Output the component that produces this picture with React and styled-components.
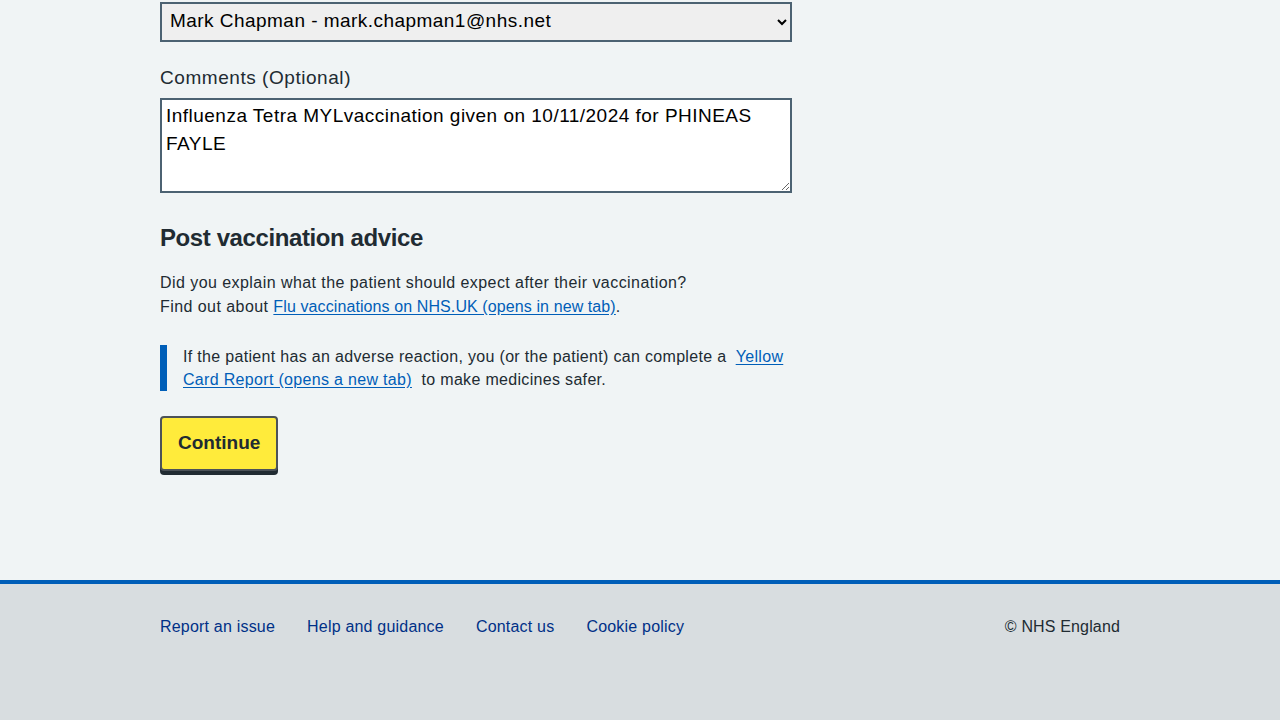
import React from "react";
import styled, { createGlobalStyle } from "styled-components";

const GlobalStyle = createGlobalStyle`
  html, body { margin: 0; padding: 0; }
  body {
    background: #f0f4f5;
    font-family: "Liberation Sans", Arial, sans-serif;
    color: #212b32;
    -webkit-font-smoothing: antialiased;
  }
  * { box-sizing: border-box; }
`;

const Page = styled.div`
  min-height: 720px;
  display: flex;
  flex-direction: column;
`;

const Main = styled.main`
  width: 960px;
  margin: 0 auto;
  padding: 2px 0 109px;
`;

const Form = styled.form`
  width: 632px;
  display: flex;
  flex-direction: column;
`;

const Select = styled.select`
  width: 100%;
  height: 40px;
  border: 2px solid #4c6272;
  border-radius: 0;
  background: #efefef;
  color: #000;
  font-family: "Liberation Sans", Arial, sans-serif;
  font-size: 19px;
  letter-spacing: 0.46px;
  padding: 0 4px 4px 4px;
  margin: 0 0 22px;
`;

const Label = styled.label`
  display: block;
  font-size: 19px;
  line-height: 28px;
  letter-spacing: 0.55px;
  margin-bottom: 6px;
  color: #212b32;
`;

const TextArea = styled.textarea`
  display: block;
  width: 100%;
  height: 95px;
  border: 2px solid #4c6272;
  border-radius: 0;
  background: #fff;
  color: #000;
  font-family: "Liberation Sans", Arial, sans-serif;
  font-size: 19px;
  line-height: 28px;
  letter-spacing: 0.48px;
  padding: 2px 4px;
  margin: 0;
  resize: vertical;
`;

const Heading = styled.h2`
  font-size: 24px;
  line-height: 32px;
  font-weight: 700;
  letter-spacing: -0.4px;
  margin: 29px 0 17px;
  color: #212b32;
`;

const Para = styled.p`
  font-size: 16px;
  line-height: 24px;
  letter-spacing: 0.44px;
  margin: 0 0 26px;
`;

const Link = styled.a`
  color: #005eb8;
  text-decoration: underline;
  text-underline-offset: 2px;
  letter-spacing: ${(p) => p.$spacing || "inherit"};
`;

const Inset = styled.div`
  border-left: 7px solid #005eb8;
  padding-left: 16px;
  font-size: 16px;
  line-height: 23px;
  letter-spacing: 0.32px;
  margin: 0 0 24px;
`;

const InsetText = styled.p`
  margin: 0;
`;

const Button = styled.button`
  align-self: flex-start;
  height: 55px;
  background: #ffeb3b;
  border: 2px solid #4c5258;
  border-radius: 4px;
  box-shadow: 0 4px 0 #212b32;
  color: #212b32;
  font-family: "Liberation Sans", Arial, sans-serif;
  font-size: 19px;
  font-weight: 700;
  padding: 0 16px 2px;
  margin-top: 1px;
  cursor: pointer;
`;

const Footer = styled.footer`
  flex: 1;
  background: #d8dde0;
  border-top: 4px solid #005eb8;
`;

const FooterInner = styled.div`
  width: 960px;
  margin: 0 auto;
  padding-top: 31px;
  display: flex;
  justify-content: space-between;
  align-items: flex-start;
`;

const FooterList = styled.ul`
  list-style: none;
  margin: 0;
  padding: 0;
  display: flex;
  gap: 32px;
`;

const FooterLink = styled.a`
  color: #003087;
  text-decoration: none;
  font-size: 16px;
  line-height: 24px;
  letter-spacing: 0.2px;
`;

const Copyright = styled.p`
  margin: 0;
  font-size: 16px;
  line-height: 24px;
  letter-spacing: 0.15px;
  color: #212b32;
`;

export default function App() {
  return (
    <Page>
      <GlobalStyle />
      <Main>
        <Form onSubmit={(e) => e.preventDefault()}>
          <Select defaultValue="mc">
            <option value="mc">Mark Chapman - mark.chapman1@nhs.net</option>
          </Select>
          <Label htmlFor="comments">Comments (Optional)</Label>
          <TextArea
            id="comments"
            defaultValue="Influenza Tetra MYLvaccination given on 10/11/2024 for PHINEAS FAYLE"
          />
          <Heading>Post vaccination advice</Heading>
          <Para>
            Did you explain what the patient should expect after their vaccination?
            <br />
            Find out about{" "}
            <Link href="#" $spacing="0.1px">Flu vaccinations on NHS.UK (opens in new tab)</Link>.
          </Para>
          <Inset>
            <InsetText>
              If the patient has an adverse reaction, you (or the patient) can complete a{"\u00a0 "}
              <Link href="#">Yellow Card Report (opens a new tab)</Link>
              {"\u00a0 "}to make medicines safer.
            </InsetText>
          </Inset>
          <Button type="submit">Continue</Button>
        </Form>
      </Main>
      <Footer>
        <FooterInner>
          <FooterList>
            <li><FooterLink href="#">Report an issue</FooterLink></li>
            <li><FooterLink href="#">Help and guidance</FooterLink></li>
            <li><FooterLink href="#">Contact us</FooterLink></li>
            <li><FooterLink href="#">Cookie policy</FooterLink></li>
          </FooterList>
          <Copyright>© NHS England</Copyright>
        </FooterInner>
      </Footer>
    </Page>
  );
}
